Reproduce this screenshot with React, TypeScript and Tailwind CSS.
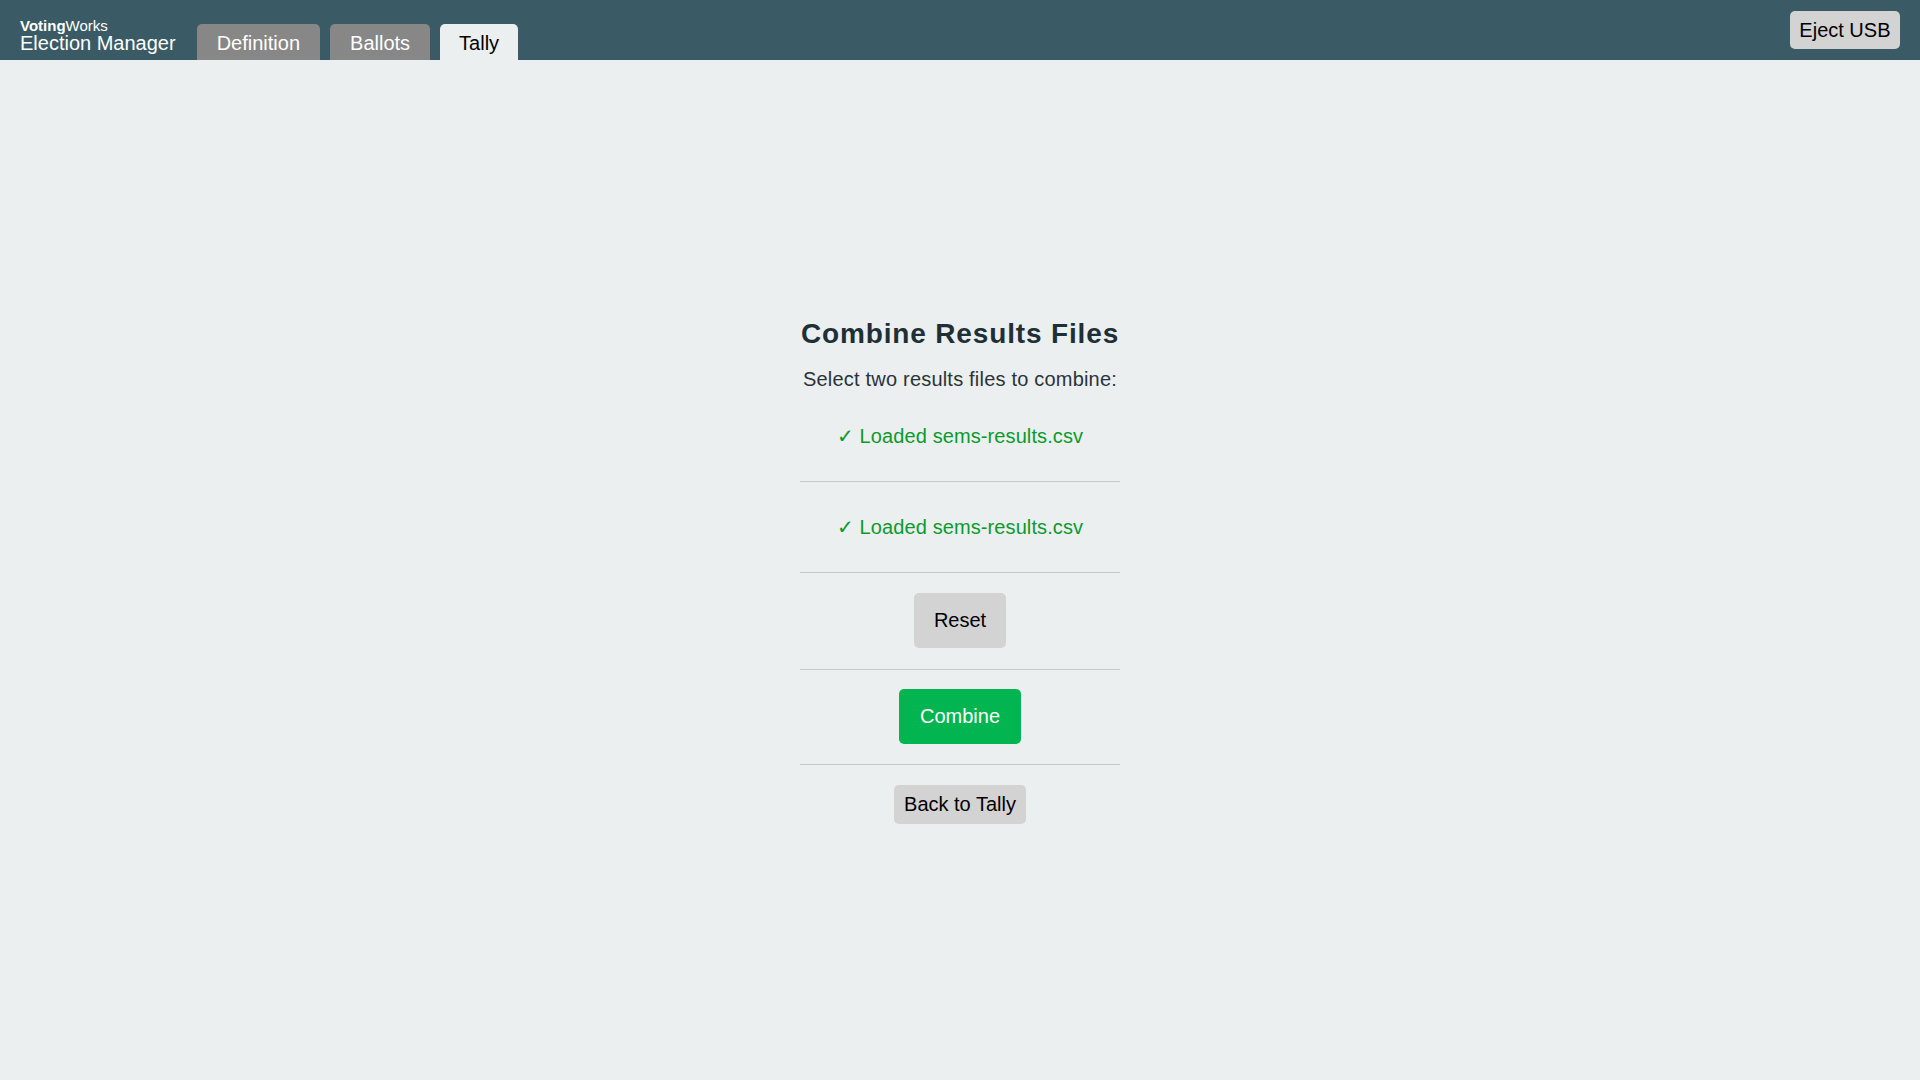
/**
 * Election Manager - Combine Results Files screen
 */

const tabs = [
  { label: "Definition", active: false },
  { label: "Ballots", active: false },
  { label: "Tally", active: true },
];

function Header() {
  return (
    <header className="flex h-[60px] items-end bg-[#3a5b65] px-5">
      <div className="pb-[7px] text-white">
        <div className="text-[15px] leading-[14px]">
          <span className="font-bold">Voting</span>Works
        </div>
        <div className="text-[20px] leading-[20px]">Election Manager</div>
      </div>
      <nav className="ml-[21px] flex gap-[10px]">
        {tabs.map((tab) => (
          <button
            key={tab.label}
            type="button"
            className={
              tab.active
                ? "h-[36px] rounded-t-[5px] bg-[#ebeff0] px-[19px] pt-[7px] pb-[5px] text-[20px] leading-6 text-black"
                : "h-[36px] rounded-t-[5px] bg-[#878787] px-5 pt-[7px] pb-[5px] text-[20px] leading-6 text-white"
            }
          >
            {tab.label}
          </button>
        ))}
      </nav>
      <button
        type="button"
        className="mt-[11px] ml-auto flex h-[38px] items-center self-start rounded-[5px] bg-[#d3d3d3] px-[9.5px] text-[20px] leading-6 text-black"
      >
        Eject USB
      </button>
    </header>
  );
}

function LoadedFile({ name }: { name: string }) {
  return (
    <div className="border-b border-[#c6c9cb] py-[33px] text-center text-[20px] leading-6 tracking-[0.1px] text-[#0b9a2c]">
      ✓ Loaded {name}
    </div>
  );
}

export default function App() {
  return (
    <div
      className="flex min-h-screen flex-col bg-[#ebeff0]"
      style={{ fontFamily: '"Liberation Sans", Arial, sans-serif' }}
    >
      <Header />
      <main className="flex flex-1 items-center justify-center">
        <div className="w-[320px] text-center">
          <h1 className="whitespace-nowrap text-[28px] font-bold leading-[34px] tracking-[0.85px] text-[#1f2f36]">
            Combine Results Files
          </h1>
          <p className="mt-4 whitespace-nowrap text-[20px] leading-6 tracking-[0.2px] text-[#2b3338]">
            Select two results files to combine:
          </p>

          <LoadedFile name="sems-results.csv" />
          <LoadedFile name="sems-results.csv" />

          <div className="flex justify-center border-b border-[#c6c9cb] pt-5 pb-[21px]">
            <button
              type="button"
              className="h-[55px] rounded-[5px] bg-[#d3d3d3] px-5 text-[20px] leading-6 text-black"
            >
              Reset
            </button>
          </div>

          <div className="flex justify-center border-b border-[#c6c9cb] pt-[19px] pb-5">
            <button
              type="button"
              className="h-[55px] rounded-[5px] bg-[#02b550] px-[21px] text-[20px] leading-6 text-white"
            >
              Combine
            </button>
          </div>

          <div className="flex justify-center pt-5">
            <button
              type="button"
              className="h-[39px] rounded-[5px] bg-[#d3d3d3] px-[10px] text-[20px] leading-6 text-black"
            >
              Back to Tally
            </button>
          </div>
        </div>
      </main>
    </div>
  );
}
